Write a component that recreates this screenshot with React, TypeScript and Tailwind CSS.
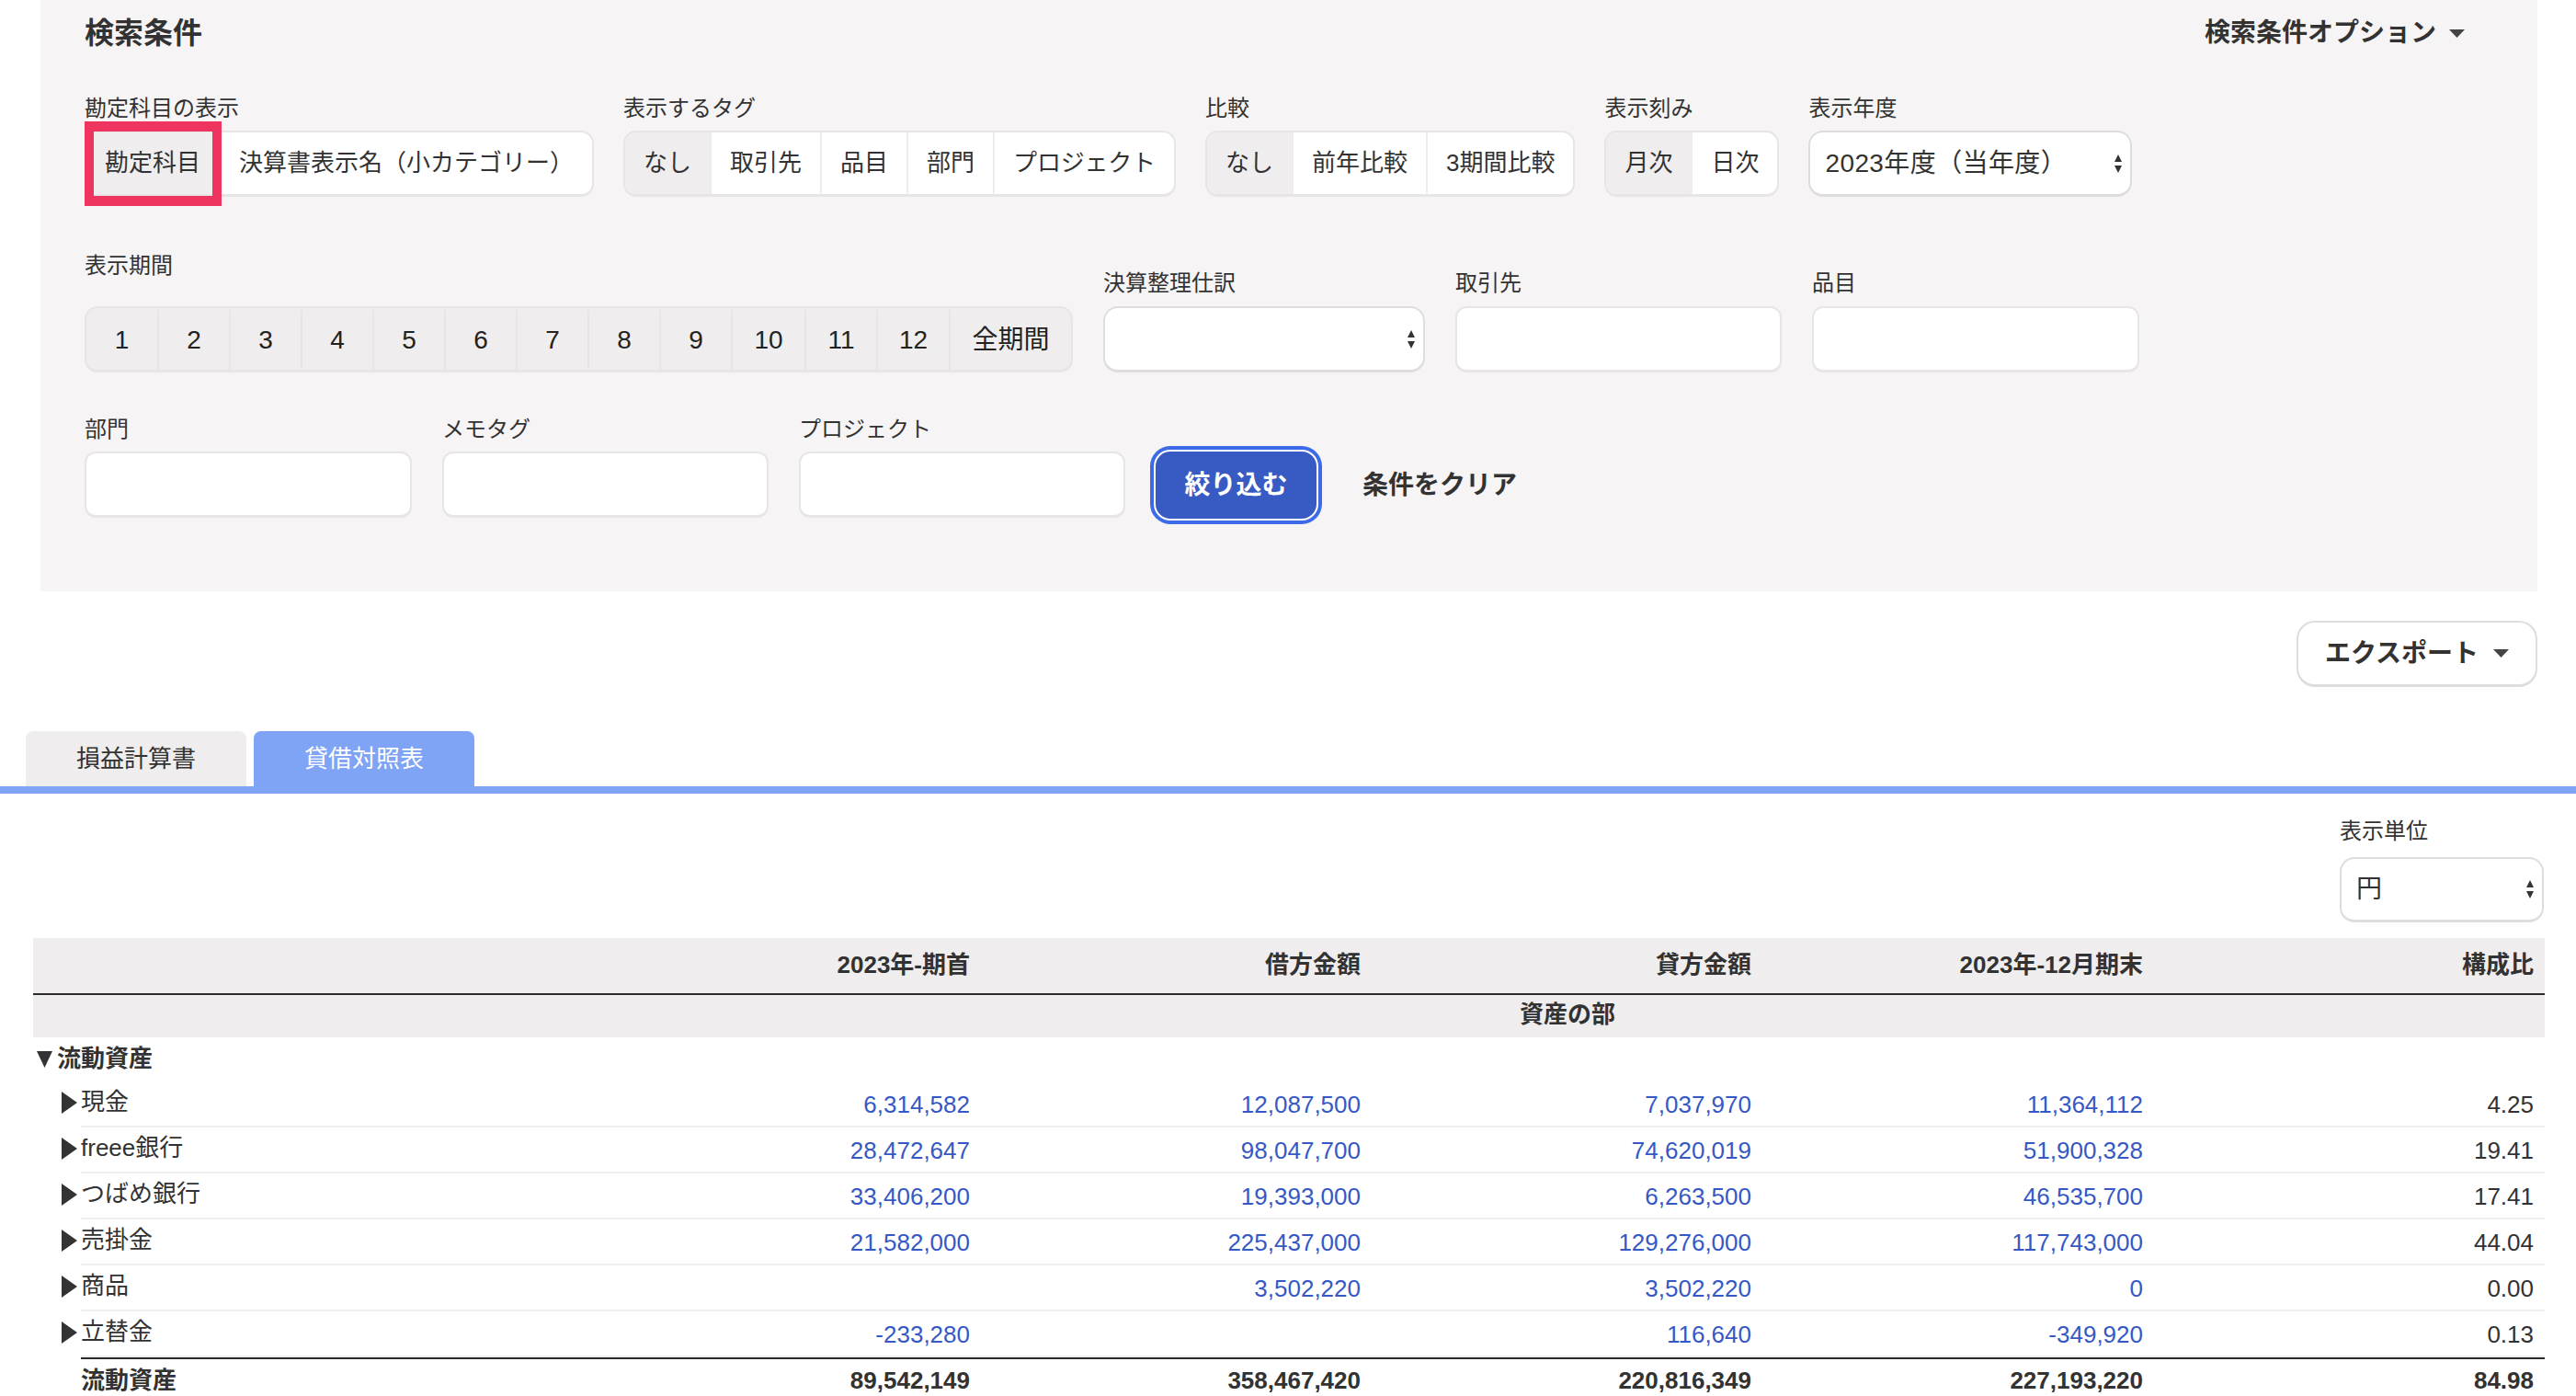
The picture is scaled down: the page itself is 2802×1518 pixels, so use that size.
const rows = [
  { name: '現金', v: ['6,314,582', '12,087,500', '7,037,970', '11,364,112'], ratio: '4.25' },
  { name: 'freee銀行', v: ['28,472,647', '98,047,700', '74,620,019', '51,900,328'], ratio: '19.41' },
  { name: 'つばめ銀行', v: ['33,406,200', '19,393,000', '6,263,500', '46,535,700'], ratio: '17.41' },
  { name: '売掛金', v: ['21,582,000', '225,437,000', '129,276,000', '117,743,000'], ratio: '44.04' },
  { name: '商品', v: ['', '3,502,220', '3,502,220', '0'], ratio: '0.00' },
  { name: '立替金', v: ['-233,280', '', '116,640', '-349,920'], ratio: '0.13' },
];

const totals = ['89,542,149', '358,467,420', '220,816,349', '227,193,220', '84.98'];
const headers = ['2023年-期首', '借方金額', '貸方金額', '2023年-12月期末', '構成比'];
const months = [
  { label: '1', w: 'w-[77px]' },
  { label: '2', w: 'w-[78px]' },
  { label: '3', w: 'w-[78px]' },
  { label: '4', w: 'w-[78px]' },
  { label: '5', w: 'w-[78px]' },
  { label: '6', w: 'w-[78px]' },
  { label: '7', w: 'w-[78px]' },
  { label: '8', w: 'w-[78px]' },
  { label: '9', w: 'w-[78px]' },
  { label: '10', w: 'w-[80px]' },
  { label: '11', w: 'w-[78px]' },
  { label: '12', w: 'w-[79px]' },
];

const Updown = () => (
  <svg width="8" height="20" viewBox="0 0 8 20" className="shrink-0">
    <path d="M4 0 L8 8 L0 8 Z M0 12 L8 12 L4 20 Z" fill="#333" />
  </svg>
);

const Caret = () => (
  <svg width="17" height="9" viewBox="0 0 17 9" className="shrink-0">
    <path d="M0 0 H17 L8.5 9 Z" fill="#444" />
  </svg>
);

const Field = ({ label, gap = 'mb-[10px]', children }: { label: string; gap?: string; children: React.ReactNode }) => (
  <div>
    <div className={`h-[30px] leading-[30px] text-[24px] ${gap}`}>{label}</div>
    {children}
  </div>
);

const Segments = ({ items, active }: { items: string[]; active: number }) => (
  <div className="flex h-[72px] rounded-[14px] border-2 border-b-[3px] border-[#e7e5e6] bg-white overflow-hidden">
    {items.map((item, i) => (
      <div
        key={item}
        className={`flex items-center px-[20px] text-[26px] ${i > 0 ? 'border-l-2 border-[#eeeced]' : ''} ${i === active ? 'bg-[#efedee]' : ''} ${item === 'プロジェクト' ? 'tracking-[-0.2px]' : ''}`}
      >
        {item}
      </div>
    ))}
  </div>
);

const SelectBox = ({ value, className }: { value?: string; className: string }) => (
  <div className={`flex items-center justify-between rounded-[16px] border-2 border-b-[3px] border-[#dedcdd] bg-white pr-[9px] text-[28px] ${className}`}>
    <span>{value}</span>
    <Updown />
  </div>
);

const TextInput = ({ className }: { className: string }) => (
  <input className={`block h-[72px] rounded-[12px] border-2 border-b-[3px] border-[#e7e5e6] bg-white ${className}`} />
);

export default function App() {
  return (
    <div className="h-[1518px] overflow-hidden bg-white text-[#323232] [font-family:'Liberation_Sans','Noto_Sans_CJK_JP',sans-serif]">
      {/* 検索条件 */}
      <section className="ml-[44px] mr-[42px] h-[643px] bg-[#f6f4f5] pl-[48px]">
        <div className="flex h-[70px] items-center justify-between pr-[79px] pt-[2px]">
          <h2 className="text-[32px] font-bold">検索条件</h2>
          <div className="flex items-center gap-[14px] text-[28px] font-bold">
            検索条件オプション
            <Caret />
          </div>
        </div>

        <div className="mt-[33px] flex gap-[32px]">
          <Field label="勘定科目の表示" gap="mb-[9px]">
            <div className="relative">
              <Segments items={['勘定科目', '決算書表示名（小カテゴリー）']} active={0} />
              <div className="absolute left-0 top-[-10px] h-[92px] w-[149px] border-x-[10px] border-y-[11px] border-[#ee3560]" />
            </div>
          </Field>
          <Field label="表示するタグ" gap="mb-[9px]">
            <Segments items={['なし', '取引先', '品目', '部門', 'プロジェクト']} active={0} />
          </Field>
          <Field label="比較" gap="mb-[9px]">
            <Segments items={['なし', '前年比較', '3期間比較']} active={0} />
          </Field>
          <Field label="表示刻み" gap="mb-[9px]">
            <Segments items={['月次', '日次']} active={0} />
          </Field>
          <Field label="表示年度" gap="mb-[9px]">
            <SelectBox value="2023年度（当年度）" className="h-[72px] w-[352px] pl-[16px] tracking-[0.4px]" />
          </Field>
        </div>

        <div className="mt-[60px] flex items-end gap-[33px]">
          <Field label="表示期間" gap="mb-[29px]">
            <div className="flex h-[72px] w-[1075px] overflow-hidden rounded-[14px] border-2 border-b-[3px] border-[#e7e5e6] bg-[#efedee] pt-[2px] text-[28px] text-[#222]">
              {months.map((m, i) => (
                <div key={m.label} className={`flex ${m.w} shrink-0 items-center justify-center ${i > 0 ? 'border-l-2 border-[#e7e5e6]' : ''}`}>
                  {m.label}
                </div>
              ))}
              <div className="flex flex-1 items-center justify-center border-l-2 border-[#e7e5e6]">全期間</div>
            </div>
          </Field>
          <Field label="決算整理仕訳">
            <SelectBox className="h-[72px] w-[350px] pl-[16px]" />
          </Field>
          <Field label="取引先">
            <TextInput className="w-[355px]" />
          </Field>
          <Field label="品目">
            <TextInput className="w-[356px]" />
          </Field>
        </div>

        <div className="mt-[47px] flex items-end gap-[33px]">
          <Field label="部門" gap="mb-[9px]">
            <TextInput className="w-[356px]" />
          </Field>
          <Field label="メモタグ" gap="mb-[9px]">
            <TextInput className="w-[355px]" />
          </Field>
          <Field label="プロジェクト" gap="mb-[9px]">
            <TextInput className="w-[355px]" />
          </Field>
          <div className="-mb-[3px] -ml-[2px] flex items-center gap-[48px]">
            <button className="h-[77px] w-[179px] rounded-[18px] border-2 border-white bg-[#375bc3] text-[28px] font-bold text-white ring-4 ring-[#3d6ae8]">
              絞り込む
            </button>
            <span className="text-[28px] font-bold">条件をクリア</span>
          </div>
        </div>
      </section>

      <div className="mr-[42px] mt-[32px] flex justify-end">
        <button className="flex h-[72px] w-[262px] items-center justify-center gap-[16px] rounded-[20px] border-2 border-b-[3px] border-[#dedcdd] bg-white text-[28px] font-bold">
          エクスポート
          <Caret />
        </button>
      </div>

      {/* タブ */}
      <div className="mt-[48px] flex gap-[8px] pl-[28px] text-[26px]">
        <div className="flex h-[60px] w-[240px] items-center justify-center rounded-t-[8px] bg-[#efedee]">損益計算書</div>
        <div className="flex h-[60px] w-[240px] items-center justify-center rounded-t-[8px] bg-[#7fa4f5] text-white">貸借対照表</div>
      </div>
      <div className="h-[8px] bg-[#7fa4f5]" />

      <div className="mr-[35px] mt-[26px] flex justify-end">
        <div>
          <div className="mb-[13px] h-[30px] text-[24px] leading-[30px]">表示単位</div>
          <SelectBox value="円" className="h-[71px] w-[222px] pl-[16px]" />
        </div>
      </div>

      {/* 貸借対照表 */}
      <div className="ml-[36px] mr-[34px] mt-[17px] text-[26px]">
        <div className="grid h-[62px] grid-cols-[606px_425px_425px_425px_426px_425px] items-center border-b-2 border-[#2b2b2b] bg-[#efedee] pb-[1px] font-bold">
          <div />
          {headers.map((h) => (
            <div key={h} className="pr-[12px] text-right">{h}</div>
          ))}
        </div>
        <div className="grid h-[46px] grid-cols-[606px_425px_425px_425px_426px_425px] items-center bg-[#efedee] pb-[3px] font-bold">
          <div className="col-span-3 col-start-3 text-center">資産の部</div>
        </div>
        <div className="flex h-[48px] items-center pb-[1px] pl-[4px] font-bold">
          <svg width="17" height="18" viewBox="0 0 17 18" className="mr-[5px]">
            <path d="M0 0 H17 L8.5 18 Z" fill="#333" />
          </svg>
          流動資産
        </div>
        <div className="ml-[52px]">
          {rows.map((r) => (
            <div key={r.name} className="grid h-[50px] grid-cols-[554px_425px_425px_425px_426px_425px] items-center border-b-2 border-[#efedee]">
              <div className="-ml-[21px] flex items-center gap-[4px] pb-[3px]">
                <svg width="17" height="24" viewBox="0 0 17 24">
                  <path d="M0 0 L17 12 L0 24 Z" fill="#333" />
                </svg>
                {r.name}
              </div>
              {r.v.map((n, i) => (
                <div key={i} className="pr-[12px] pt-[2px] text-right text-[#3558c4]">{n}</div>
              ))}
              <div className="pr-[12px] pt-[2px] text-right">{r.ratio}</div>
            </div>
          ))}
          <div className="grid h-[50px] grid-cols-[554px_425px_425px_425px_426px_425px] items-center border-t-2 border-[#2b2b2b] pb-[1px] font-bold">
            <div>流動資産</div>
            {totals.map((t) => (
              <div key={t} className="pr-[12px] text-right">{t}</div>
            ))}
          </div>
        </div>
      </div>
    </div>
  );
}
